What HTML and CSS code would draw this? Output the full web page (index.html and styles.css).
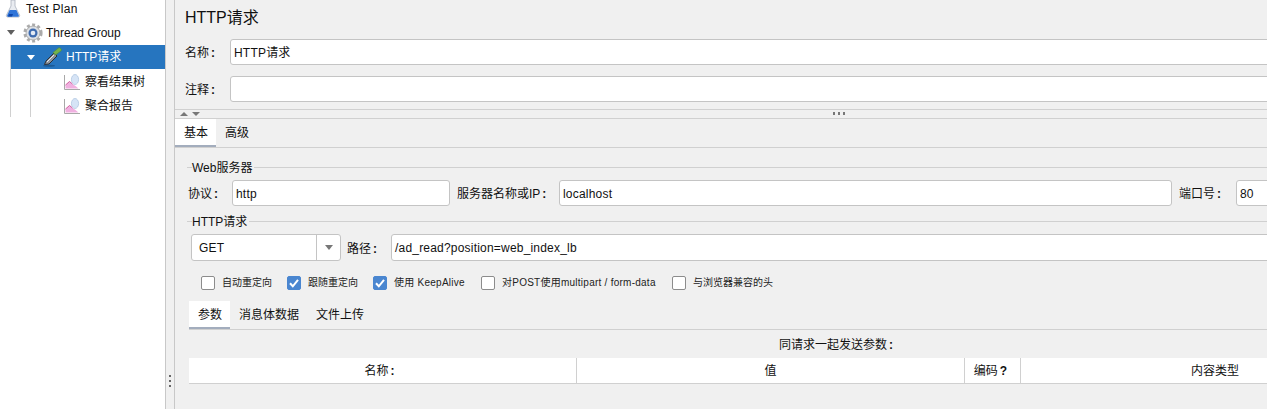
FILE: index.html
```html
<!DOCTYPE html>
<html lang="zh">
<head>
<meta charset="utf-8">
<title>HTTP请求</title>
<link rel="stylesheet" href="styles.css">
</head>
<body>
<aside class="sidebar">
  <div class="tree">
    <div class="row row-plan">
      <svg class="icon flask" viewBox="0 0 16 18"><path d="M6 0h4v6l4.500 9c.5 1.200 0 2-1.200 2H2.700c-1.200 0-1.700-.8-1.200-2L6 6z" fill="#e9ecf1" stroke="#a8b0bc" stroke-width=".8"/><path d="M4.600 10h6.800l2.400 5.300c.3 1-.2 1.500-1 1.500H3.200c-.8 0-1.300-.5-1-1.500z" fill="#2f74d8"/><path d="M4 14h4l-1 2.600H3z" fill="#0f45a8"/></svg>
      <span class="label latin">Test Plan</span>
    </div>
    <div class="row row-group">
      <span class="arrow"></span>
      <svg class="icon gear" viewBox="0 0 20 20"><circle cx="10" cy="10" r="7.800" fill="none" stroke="#ababab" stroke-width="3.600" stroke-dasharray="2.800 2.300"/><circle cx="10" cy="10" r="7" fill="#dcdfe3" stroke="#a2a2a2" stroke-width=".8"/><circle cx="10" cy="10" r="4.500" fill="#3f6cb0"/><circle cx="10" cy="10" r="2.300" fill="#e3eaf5"/></svg>
      <span class="label">Thread Group</span>
    </div>
    <div class="branch">
      <div class="row row-http">
        <span class="arrow arrow-white"></span>
        <svg class="icon pipette" viewBox="0 0 20 20"><ellipse cx="6" cy="18.800" rx="6" ry="1" fill="#1c5a94"/><path d="M1.500 17.500l1.500-3.500L11 6l3 3-8 8z" fill="#8d939b" stroke="#2d3035" stroke-width="1"/><path d="M4 15l7-7" stroke="#e6e9ec" stroke-width="1"/><path d="M12.500 8l-2.500-2.500L15.500 1c1.200-1 3.600 1.200 2.700 2.700z" fill="#73b24c" stroke="#4f8a37" stroke-width=".6"/></svg>
        <span class="label">HTTP请求</span>
      </div>
      <div class="branch branch-inner">
        <div class="row row-leaf">
          <svg class="icon graph" viewBox="0 0 16 16"><path d="M.5 1v14.500H16" fill="none" stroke="#a8a8a8"/><path d="M1.500 14.500V11l4-3.500 3 2.500 3 2 3 2.500z" fill="#f0b0e0"/><path d="M1.500 11l4-3.500 3 2.500" fill="none" stroke="#d0609f"/><ellipse cx="11" cy="5.500" rx="3.600" ry="5" fill="#d6e4f6" stroke="#a9c1de" stroke-width=".7"/></svg>
          <span class="label">察看结果树</span>
        </div>
        <div class="row row-leaf">
          <svg class="icon graph" viewBox="0 0 16 16"><path d="M.5 1v14.500H16" fill="none" stroke="#a8a8a8"/><path d="M1.500 14.500V11l4-3.500 3 2.500 3 2 3 2.500z" fill="#f0b0e0"/><path d="M1.500 11l4-3.500 3 2.500" fill="none" stroke="#d0609f"/><ellipse cx="11" cy="5.500" rx="3.600" ry="5" fill="#d6e4f6" stroke="#a9c1de" stroke-width=".7"/></svg>
          <span class="label">聚合报告</span>
        </div>
      </div>
    </div>
  </div>
</aside>
<div class="gutter"><span class="grip"></span></div>
<main class="main">
  <div class="content">
    <section class="head">
      <h1 class="title">HTTP请求</h1>
      <div class="name-row"><span class="name-label">名称<b class="colon">:</b></span><div class="input grow">HTTP请求</div></div>
      <div class="name-row note-row"><span class="name-label">注释<b class="colon">:</b></span><div class="input grow"></div></div>
    </section>
    <div class="splitter">
      <span class="tri tri-up"></span><span class="tri tri-down"></span>
      <span class="split-dots"></span>
    </div>
    <nav class="tabs tabs-top">
      <span class="tab active">基本</span><span class="tab">高级</span>
    </nav>
    <section class="body">
      <div class="legend legend-first"><span class="legend-text">Web服务器</span></div>
      <div class="server-row">
        <span class="lbl lbl-proto">协议<b class="colon">:</b></span>
        <div class="input in-proto">http</div>
        <span class="lbl lbl-host">服务器名称或IP<b class="colon">:</b></span>
        <div class="input in-host">localhost</div>
        <span class="lbl lbl-port">端口号<b class="colon">:</b></span>
        <div class="input grow">80</div>
      </div>
      <div class="legend legend-second"><span class="legend-text">HTTP请求</span></div>
      <div class="path-row">
        <div class="select"><span class="select-value">GET</span><span class="select-btn"><span class="select-tri"></span></span></div>
        <span class="lbl lbl-path">路径<b class="colon">:</b></span>
        <div class="input grow">/ad_read?position=web_index_lb</div>
      </div>
      <div class="checks">
        <label class="check c1"><span class="box"></span>自动重定向</label>
        <label class="check c2"><span class="box on"><svg viewBox="0 0 14 14"><path d="M3 7.300l2.800 3L11 3.800" fill="none" stroke="#fff" stroke-width="2"/></svg></span>跟随重定向</label>
        <label class="check c3 latin"><span class="box on"><svg viewBox="0 0 14 14"><path d="M3 7.300l2.800 3L11 3.800" fill="none" stroke="#fff" stroke-width="2"/></svg></span>使用 KeepAlive</label>
        <label class="check c4 latin"><span class="box"></span>对POST使用multipart / form-data</label>
        <label class="check"><span class="box"></span>与浏览器兼容的头</label>
      </div>
      <nav class="tabs tabs-sub">
        <span class="tab active">参数</span><span class="tab">消息体数据</span><span class="tab tab-file">文件上传</span>
      </nav>
      <p class="caption">同请求一起发送参数<b class="colon">:</b></p>
      <div class="thead">
        <span class="th th-name">名称<b class="colon">:</b></span>
        <span class="th th-value">值</span>
        <span class="th th-enc">编码<b class="colon">?</b></span>
        <span class="th th-type">内容类型</span>
      </div>
    </section>
  </div>
</main>
</body>
</html>
```
FILE: styles.css
```css
* { box-sizing: border-box; }
html, body { margin: 0; height: 409px; overflow: hidden; }
body {
  display: flex;
  background: #f0f0f0;
  color: #111;
  font: 12px/16px "Liberation Sans", "Noto Sans CJK SC", sans-serif;
}
.latin { letter-spacing: .25px; }
.colon { margin-left: 2px; }

/* Tree */
.sidebar { width: 166px; flex: none; background: #fff; border-right: 1px solid #c8c8c8; overflow: hidden; }
.tree { margin-top: -4px; }
.row { display: flex; align-items: center; height: 24px; white-space: nowrap; }
.icon { display: block; flex: none; }
.row-plan { padding-left: 5px; }
.row-plan .label { padding-top: 2px; }
.flask { width: 16px; height: 18px; margin: 1px 5px 0 0; }
.row-group { height: 25px; padding-left: 7px; }
.arrow { width: 0; height: 0; border: 4px solid transparent; border-top: 5px solid #5f5f5f; border-bottom: 0; flex: none; }
.arrow-white { border-top-color: #fff; }
.gear { width: 20px; height: 20px; margin: 0 3px 0 8px; }
.branch { margin-left: 10px; border-left: 1px solid #d0d0d0; }
.row-http { background: #2675bf; color: #fff; padding-left: 16px; }
.pipette { width: 20px; height: 20px; margin: 0 3px 0 8px; }
.branch-inner { margin-left: 19px; }
.row-leaf { padding-left: 33px; }
.row-leaf .label { padding-top: 2px; }
.graph { width: 16px; height: 16px; margin: 1px 5px 0 0; }

/* Gutter */
.gutter { width: 8px; flex: none; position: relative; }
.grip {
  position: absolute; left: 3px; top: 375px; width: 2px; height: 12px;
  background: repeating-linear-gradient(#666 0 2px, transparent 2px 5px);
}

/* Main */
.main { flex: 1; min-width: 0; overflow: hidden; border-left: 1px solid #c8c8c8; }
.content { width: 1110px; }
.head { padding: 0 0 7px 10px; }
.title { margin: 0; height: 39px; font-size: 16px; font-weight: 400; line-height: 36px; }
.name-row { display: flex; align-items: center; height: 26px; }
.note-row { margin-top: 11px; }
.name-label { width: 45px; flex: none; padding-top: 2px; }
.input {
  height: 26px; flex: none; padding: 1px 3px 0; background: #fff; letter-spacing: .2px;
  border: 1px solid #c4c4c4; border-radius: 3px; line-height: 24px; white-space: nowrap;
}
.grow { flex: 1; min-width: 0; }

.splitter { position: relative; display: flex; gap: 4px; align-items: center; height: 10px; padding-left: 5px; border-top: 1px solid #d0d0d0; border-bottom: 1px solid #d0d0d0; }
.tri { width: 0; height: 0; border: 4px solid transparent; }
.tri-up { border-bottom: 4px solid #777; border-top: 0; }
.tri-down { border-top: 4px solid #777; border-bottom: 0; }
.split-dots {
  position: absolute; left: 658px; top: 2px; width: 12px; height: 3px;
  background: repeating-linear-gradient(90deg, #777 0 2px, transparent 2px 5px);
}

.tabs { display: flex; border-bottom: 1px solid #d0d0d0; }
.tab { height: 28px; padding: 1px 9px 0; line-height: 27px; white-space: nowrap; }
.tab.active { width: 41px; background: #fff; border-bottom: 2px solid #a3adbd; }
.tabs-top { height: 29px; }
.tabs-top .tab + .tab { margin-left: -1px; }
.tabs-top .tab:not(.active) { padding-left: 10px; }

.body { padding-left: 13px; }
.legend { display: flex; align-items: center; height: 14px; position: relative; }
.legend::before { content: ""; width: 5px; height: 1px; background: #d0d0d0; flex: none; }
.legend::after { content: ""; flex: 1; height: 1px; background: #d0d0d0; margin-left: 2px; }
.legend-first { margin-top: 12px; margin-left: -1px; }
.legend-second { margin-top: 8px; margin-left: -1px; }
.legend-text { flex: none; padding-top: 2px; }

.lbl { flex: none; white-space: nowrap; padding-top: 2px; }
.server-row { display: flex; align-items: center; margin-top: 6px; height: 26px; }
.lbl-proto { margin-left: 0; width: 44px; }
.in-proto { width: 218px; }
.lbl-host { margin-left: 7px; width: 102px; }
.in-host { width: 613px; }
.lbl-port { margin-left: 7px; width: 57px; }

.path-row { display: flex; align-items: center; height: 27px; margin-top: 6px; margin-left: 3px; }
.select {
  width: 150px; height: 27px; flex: none; display: flex; background: #fff;
  border: 1px solid #c4c4c4; border-radius: 3px;
}
.select-value { flex: 1; padding: 1px 0 0 7px; line-height: 25px; letter-spacing: .2px; }
.select-btn { width: 24px; border-left: 1px solid #c4c4c4; display: flex; align-items: center; justify-content: center; }
.select-tri { width: 0; height: 0; border: 4px solid transparent; border-top: 5px solid #777; border-bottom: 0; }
.lbl-path { margin-left: 6px; width: 44px; }
.path-row .input { height: 27px; line-height: 25px; }

.checks { display: flex; height: 14px; margin-top: 15px; margin-left: 13px; }
.check { display: flex; align-items: center; font-size: 10px; white-space: nowrap; color: #222; }
.box { width: 14px; height: 14px; margin-right: 7px; flex: none; background: #fff; border: 1px solid #8c8c8c; border-radius: 2px; }
.box svg { display: block; width: 14px; height: 14px; margin: -1px; }
.box.on { background: #4a86d0; border-color: #4a86d0; }
.c1, .c2 { width: 86px; }
.c3 { width: 108px; }
.c4 { width: 191px; }

.tabs-sub { height: 29px; margin-top: 11px; margin-left: 1px; }
.tabs-sub .tab-file { padding-left: 8px; }
.caption { margin: 6px 0 0; height: 22px; padding: 1px 0 0 591px; line-height: 16px; white-space: nowrap; }
.thead { display: flex; height: 26px; margin-left: 1px; background: #fff; border-bottom: 1px solid #d0d0d0; line-height: 27px; }
.th { flex: none; text-align: center; border-right: 1px solid #d0d0d0; white-space: nowrap; }
.th-name { width: 388px; padding-right: 6px; }
.th-value { width: 388px; }
.th-enc { width: 56px; padding-right: 4px; }
.th-type { width: 388px; border-right: 0; }
```
